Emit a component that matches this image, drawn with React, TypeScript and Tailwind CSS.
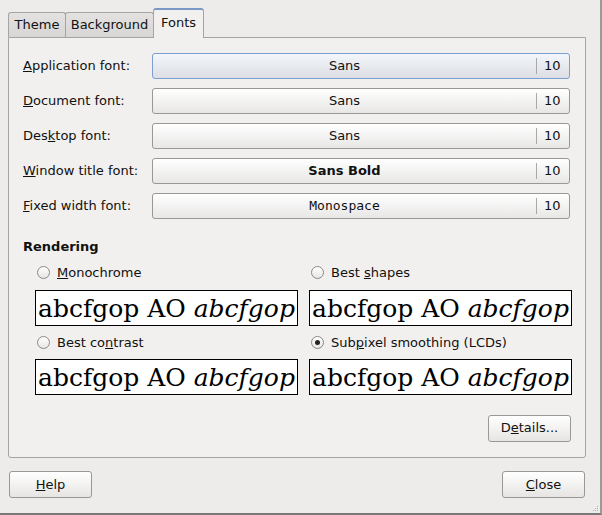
import React from "react";

const sans = { fontFamily: '"DejaVu Sans", Verdana, sans-serif' };

function FontButton({ name, focused, bold, mono }: { name: string; focused?: boolean; bold?: boolean; mono?: boolean }) {
  return (
    <div
      className={
        "flex h-[26px] w-[418px] items-center rounded-[3px] border " +
        (focused
          ? "border-[#7b9fd0] bg-gradient-to-b from-[#f3f6fa] to-[#dcdee3]"
          : "border-[#9a9896] bg-gradient-to-b from-[#ffffff] to-[#e8e7e6]")
      }
    >
      <div
        className={"flex-1 text-center " + (bold ? "font-bold" : "")}
        style={mono ? { fontFamily: '"DejaVu Sans Mono", monospace', fontSize: 13 } : undefined}
      >
        {name}
      </div>
      <div className="h-[16px] w-px bg-[#a9a8a6]" />
      <div className="w-[32px] pl-[7px]">10</div>
    </div>
  );
}

function Row({ label, u, rest, pre, ...btn }: { label?: string; pre?: string; u: string; rest: string; name: string; focused?: boolean; bold?: boolean; mono?: boolean }) {
  return (
    <div className="flex h-[26px] items-center">
      <div className="w-[129px]">
        {pre}
        <u>{u}</u>
        {rest}
      </div>
      <FontButton {...btn} />
    </div>
  );
}

function Radio({ checked }: { checked?: boolean }) {
  return (
    <div className="flex h-[13px] w-[13px] items-center justify-center rounded-full border border-[#8a8987] bg-gradient-to-b from-[#ffffff] to-[#e6e5e3]">
      {checked && <div className="h-[5px] w-[5px] rounded-full bg-[#222]" />}
    </div>
  );
}

function Preview() {
  return (
    <div
      className="flex h-[36px] w-[263px] items-center overflow-hidden border border-black bg-white pl-[2px] pt-[1px] text-[25px] leading-none text-black"
      style={{ fontFamily: '"DejaVu Serif", serif' }}
    >
      <span className="whitespace-nowrap">
        abcfgop AO <i>abcfgop</i>
      </span>
    </div>
  );
}

function Option({ checked, children }: { checked?: boolean; children: React.ReactNode }) {
  return (
    <div className="flex h-[18px] items-center pl-[2px]">
      <Radio checked={checked} />
      <span className="ml-[7px]">{children}</span>
    </div>
  );
}

export default function App() {
  return (
    <div
      className="relative h-[515px] w-[602px] overflow-hidden border-b-2 border-r-2 border-b-[#7a7977] border-r-[#9b9a98] bg-[#edecea] text-[13px] text-[#111]"
      style={sans}
    >
      <div className="flex h-[37px] items-end pl-[8px] pt-[8px]">
        <div className="relative z-0 flex h-[25px] w-[58px] items-center justify-center rounded-t-[3px] border border-b-0 border-[#a5a4a2] bg-gradient-to-b from-[#e3e2e0] to-[#d7d6d4]">
          Theme
        </div>
        <div className="relative z-0 -ml-px flex h-[25px] w-[89px] items-center justify-center rounded-t-[3px] border border-b-0 border-[#a5a4a2] bg-gradient-to-b from-[#e3e2e0] to-[#d7d6d4]">
          Background
        </div>
        <div className="relative z-10 -mb-px -ml-px flex h-[30px] w-[51px] items-center justify-center rounded-t-[3px] border border-b-0 border-[#a5a4a2] border-t-2 border-t-[#7a98c4] bg-[#f1f0ee] pb-[3px]">
          Fonts
        </div>
      </div>
      <div className="ml-[8px] flex h-[421px] w-[578px] flex-col rounded-b-[3px] border border-[#a5a4a2] bg-[#f1f0ee] px-[14px] pt-[15px]">
        <div className="flex flex-col gap-[9px]">
          <Row u="A" rest="pplication font:" name="Sans" focused />
          <Row u="D" rest="ocument font:" name="Sans" />
          <Row pre="Des" u="k" rest="top font:" name="Sans" />
          <Row u="W" rest="indow title font:" name="Sans Bold" bold />
          <Row u="F" rest="ixed width font:" name="Monospace" mono />
        </div>
        <div className="mt-[18px] font-bold">Rendering</div>
        <div className="ml-[12px] mt-[7px] grid w-[537px] grid-cols-2 gap-x-[11px]">
          <div className="flex flex-col">
            <Option>
              <u>M</u>onochrome
            </Option>
            <div className="mt-[8px]">
              <Preview />
            </div>
            <div className="mt-[8px]">
              <Option>
                Best co<u>n</u>trast
              </Option>
            </div>
            <div className="mt-[7px]">
              <Preview />
            </div>
          </div>
          <div className="flex flex-col">
            <Option>
              Best <u>s</u>hapes
            </Option>
            <div className="mt-[8px]">
              <Preview />
            </div>
            <div className="mt-[8px]">
              <Option checked>
                Sub<u>p</u>ixel smoothing (LCDs)
              </Option>
            </div>
            <div className="mt-[7px]">
              <Preview />
            </div>
          </div>
        </div>
        <div className="mt-[20px] flex justify-end">
          <button className="flex h-[27px] w-[83px] items-center justify-center rounded-[3px] border border-[#9a9896] bg-gradient-to-b from-[#ffffff] to-[#e6e5e3]">
            D<u>e</u>tails...
          </button>
        </div>
      </div>
      <div className="mt-[13px] flex w-[585px] justify-between pl-[9px]">
        <button className="flex h-[27px] w-[83px] items-center justify-center rounded-[3px] border border-[#9a9896] bg-gradient-to-b from-[#ffffff] to-[#e6e5e3]">
          <u>H</u>elp
        </button>
        <button className="flex h-[27px] w-[83px] items-center justify-center rounded-[3px] border border-[#9a9896] bg-gradient-to-b from-[#ffffff] to-[#e6e5e3]">
          <u>C</u>lose
        </button>
      </div>
      <div className="absolute bottom-[2px] right-[2px] grid grid-cols-3 gap-[1px] opacity-60">
        {[0, 1, 2, 3, 4, 5, 6, 7, 8].map((i) => (
          <div key={i} className={"h-[1px] w-[1px] " + (i === 0 || i === 1 || i === 3 ? "bg-transparent" : "bg-[#888]")} />
        ))}
      </div>
    </div>
  );
}
